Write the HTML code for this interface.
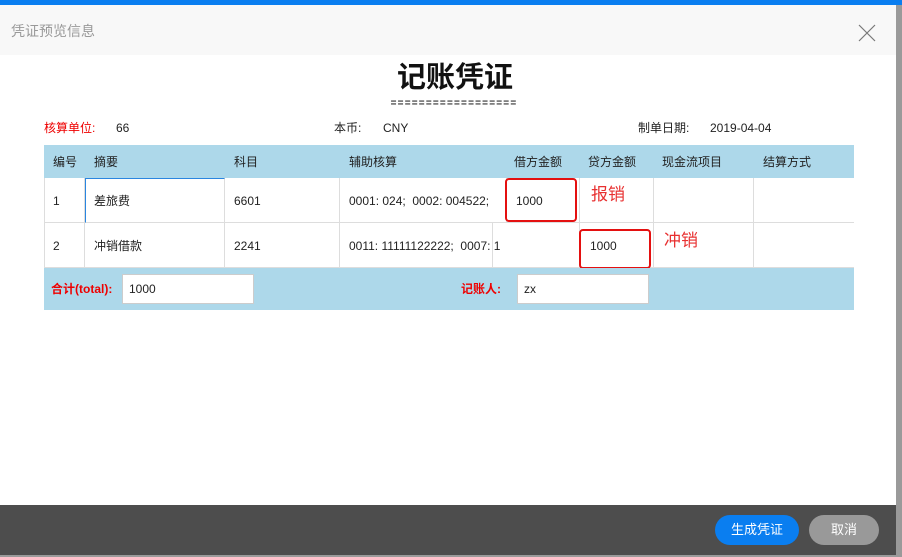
<!DOCTYPE html>
<html><head><meta charset="utf-8"><style>
*{margin:0;padding:0;box-sizing:border-box}
body{width:902px;height:557px;overflow:hidden;background:#9a9a9a;font-family:"Liberation Sans","Noto Sans CJK SC",sans-serif;font-size:12px;color:#222;position:relative}
.abs{position:absolute}
.t{position:absolute;white-space:nowrap;line-height:14px}
.cell{position:absolute;border-right:1px solid #ddd;border-bottom:1px solid #ddd;background:#fff}
.red{color:#e00}
.inp{position:absolute;background:#fff;border:1px solid #ccc;padding-left:6px;line-height:28px}
.box{position:absolute;border:2px solid #e41010;border-radius:4px}
</style></head><body>
<div class="abs" style="left:0;top:0;width:902px;height:5px;background:#0a7ef0"></div>
<div class="abs" style="left:0;top:5px;width:896px;height:500px;background:#fff"></div>
<div class="abs" style="left:0;top:5px;width:896px;height:50px;background:#f8f8f8"></div>
<div class="t" style="left:11px;top:23px;font-size:14px;line-height:16px;color:#999">凭证预览信息</div>
<svg class="abs" style="left:858px;top:24px" width="18" height="18"><path d="M1 1L17 17M17 1L1 17" stroke="#777" stroke-width="1.2"/></svg>
<div class="t" style="left:0;width:910px;text-align:center;top:61px;font-size:29px;line-height:34px;font-weight:bold;color:#111">记账凭证</div>
<div class="t" style="left:0;width:908px;text-align:center;top:99px;font-size:10px;line-height:10px;letter-spacing:1.2px;font-weight:bold;color:#333">==================</div>
<div class="t red" style="left:44px;top:121px">核算单位:</div><div class="t" style="left:116px;top:121px">66</div>
<div class="t" style="left:334px;top:121px">本币:</div><div class="t" style="left:383px;top:121px">CNY</div>
<div class="t" style="left:638px;top:121px">制单日期:</div><div class="t" style="left:710px;top:121px">2019-04-04</div>
<div class="abs" style="left:44px;top:145px;width:810px;height:33px;background:#add8ea"></div>
<div class="t" style="left:53px;top:155px">编号</div><div class="t" style="left:94px;top:155px">摘要</div><div class="t" style="left:234px;top:155px">科目</div><div class="t" style="left:349px;top:155px">辅助核算</div><div class="t" style="left:514px;top:155px">借方金额</div><div class="t" style="left:588px;top:155px">贷方金额</div><div class="t" style="left:662px;top:155px">现金流项目</div><div class="t" style="left:763px;top:155px">结算方式</div>
<div class="cell" style="left:44px;top:178px;width:41px;height:45px;border-left:1px solid #ddd"></div>
<div class="cell" style="left:85px;top:178px;width:140px;height:45px;border-top:1px solid #2a86e0;border-left:1px solid #2a86e0"></div>
<div class="cell" style="left:225px;top:178px;width:115px;height:45px"></div>
<div class="cell" style="left:340px;top:178px;width:167px;height:45px"></div>
<div class="cell" style="left:507px;top:178px;width:73px;height:45px"></div>
<div class="cell" style="left:580px;top:178px;width:74px;height:45px"></div>
<div class="cell" style="left:654px;top:178px;width:100px;height:45px"></div>
<div class="cell" style="left:754px;top:178px;width:100px;height:45px;border-right:none"></div>
<div class="cell" style="left:44px;top:223px;width:41px;height:45px;border-left:1px solid #ddd"></div>
<div class="cell" style="left:85px;top:223px;width:140px;height:45px"></div>
<div class="cell" style="left:225px;top:223px;width:115px;height:45px"></div>
<div class="cell" style="left:340px;top:223px;width:153px;height:45px"></div>
<div class="cell" style="left:493px;top:223px;width:87px;height:45px"></div>
<div class="cell" style="left:580px;top:223px;width:74px;height:45px"></div>
<div class="cell" style="left:654px;top:223px;width:100px;height:45px"></div>
<div class="cell" style="left:754px;top:223px;width:100px;height:45px;border-right:none"></div>
<div class="t" style="left:53px;top:194px">1</div><div class="t" style="left:94px;top:194px">差旅费</div><div class="t" style="left:234px;top:194px">6601</div><div class="t" style="left:349px;top:194px">0001: 024;&nbsp; 0002: 004522;</div><div class="t" style="left:516px;top:194px">1000</div>
<div class="t" style="left:53px;top:239px">2</div><div class="t" style="left:94px;top:239px">冲销借款</div><div class="t" style="left:234px;top:239px">2241</div><div class="t" style="left:349px;top:239px">0011: 11111122222;&nbsp; 0007: 1</div><div class="t" style="left:590px;top:239px">1000</div>
<div class="box" style="left:505px;top:178px;width:72px;height:44px"></div>
<div class="box" style="left:579px;top:229px;width:72px;height:40px"></div>
<div class="t red" style="left:591px;top:185px;font-size:17px;line-height:20px;color:#e83030">报销</div>
<div class="t red" style="left:664px;top:231px;font-size:17px;line-height:20px;color:#e83030">冲销</div>
<div class="abs" style="left:44px;top:268px;width:810px;height:42px;background:#add8ea"></div>
<div class="t red" style="left:51px;top:282px;font-weight:bold">合计(total):</div>
<div class="inp" style="left:122px;top:274px;width:132px;height:30px">1000</div>
<div class="t red" style="left:461px;top:282px;font-weight:bold">记账人:</div>
<div class="inp" style="left:517px;top:274px;width:132px;height:30px">zx</div>
<div class="abs" style="left:0;top:505px;width:896px;height:50px;background:#4d4d4d"></div>
<div class="abs" style="left:715px;top:515px;width:84px;height:30px;border-radius:15px;background:#0a7ef0;color:#fff;text-align:center;line-height:30px;font-size:13px">生成凭证</div>
<div class="abs" style="left:809px;top:515px;width:70px;height:30px;border-radius:15px;background:#999;color:#fff;text-align:center;line-height:30px;font-size:13px">取消</div>
</body></html>
